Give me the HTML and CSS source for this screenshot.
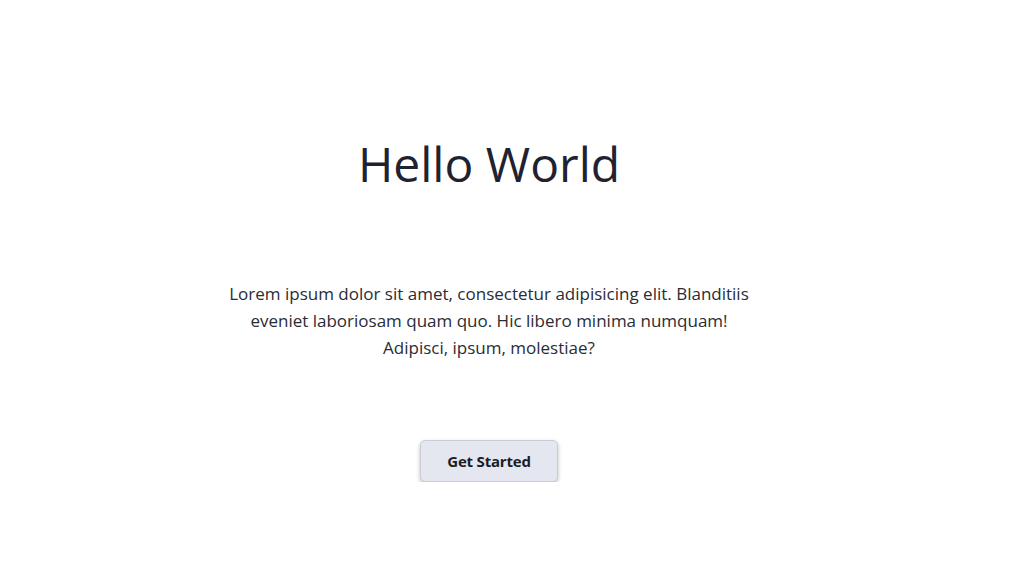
FILE: index.html
```html
<!DOCTYPE html>
<html>
<head>
<meta charset="utf-8">
<link rel="stylesheet" href="styles.css">
</head>
<body>
<main class="hero">
  <h1 class="hero-title">Hello World</h1>
  <p class="hero-text">Lorem ipsum dolor sit amet, consectetur adipisicing elit. Blanditiis eveniet laboriosam quam quo. Hic libero minima numquam! Adipisci, ipsum, molestiae?</p>
  <button class="hero-btn">Get Started</button>
</main>
</body>
</html>
```
FILE: styles.css
```css
html, body {
  margin: 0;
  padding: 0;
  background: #ffffff;
}
body {
  font-family: "Open Sans", "Noto Sans", "Liberation Sans", sans-serif;
  color: #1f2230;
}
.hero {
  width: 962px;
  margin-left: 8px;
  display: flex;
  flex-direction: column;
  align-items: center;
  padding-top: 132px;
}
.hero-title {
  margin: 0;
  font-size: 48px;
  font-weight: 400;
  line-height: 64px;
  letter-spacing: 0;
  color: #1f2230;
}
.hero-text {
  margin: 84px 0 0;
  width: 524px;
  text-align: center;
  font-size: 17px;
  line-height: 27px;
  color: #2a2c36;
}
.hero-btn {
  margin-top: 79px;
  width: 138px;
  height: 42px;
  border: 1px solid #c9ccd6;
  border-radius: 5px;
  background: #e4e7f0;
  box-shadow: 0 2px 4px rgba(0,0,0,0.25);
  font-family: "Open Sans", "Noto Sans", sans-serif;
  font-weight: 700;
  font-size: 15px;
  color: #1b1d27;
  letter-spacing: -0.2px;
}
```
